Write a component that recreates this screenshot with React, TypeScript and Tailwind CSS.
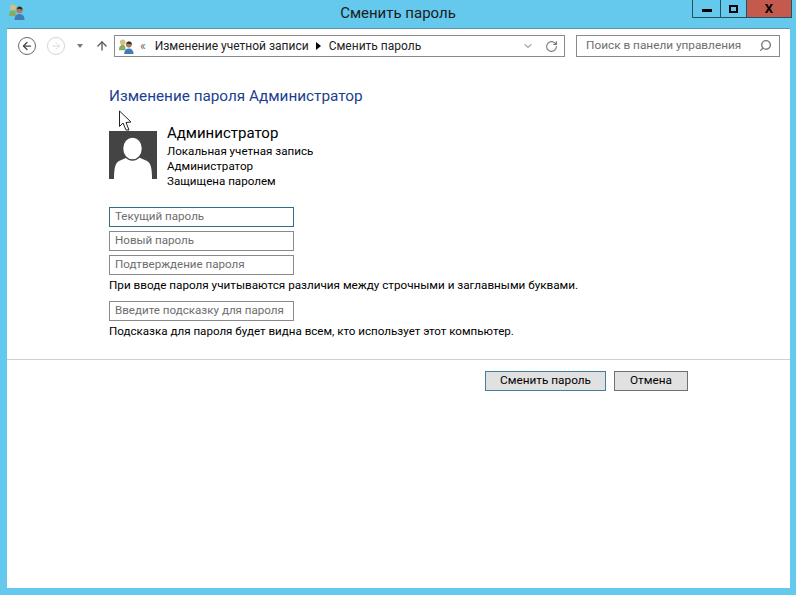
import React from "react";
import { ArrowLeft, ArrowRight, ArrowUp, ChevronDown, RotateCw, Search } from "lucide-react";

const UsersIcon = ({ size = 18 }: { size?: number }) => (
  <svg width={size} height={size} viewBox="0 0 18 18">
    <circle cx="5" cy="4.500" r="3" fill="#d3bf86" />
    <path d="M1 13c0-4 1.500-5.500 4-5.500S8 9 8 13z" fill="#86ab63" />
    <circle cx="11.500" cy="7" r="3.200" fill="#a97c58" />
    <path d="M11.500 3.600c2 0 3.200 1.300 3 3.200-1.400-.9-3.500-1-5.400-.6.100-1.500 1-2.600 2.400-2.600z" fill="#2f2c29" />
    <path d="M6.500 17c0-4 2-6 5-6s5 2 5 6z" fill="#3f7db8" />
  </svg>
);

const Field = ({ label, focused }: { label: string; focused?: boolean }) => (
  <div
    className={`w-[185px] h-5 border flex items-center pl-[5px] text-[11.6px] whitespace-nowrap text-[#6d6d6d] ${
      focused ? "border-[#2f6f86]" : "border-[#8a8a8a]"
    }`}
  >
    {label}
  </div>
);

export default function App() {
  return (
    <div
      className="relative w-[796px] h-[595px] flex flex-col bg-[#64c9ec] overflow-hidden text-black"
      style={{ fontFamily: 'Roboto, "Open Sans", sans-serif' }}
    >
      <div className="h-7 flex shrink-0">
        <div className="w-[692px] relative flex items-center pl-2 pb-1">
          <UsersIcon />
          <div className="absolute left-[104px] top-[2px] text-center text-[15px] text-[#1c1c1c] w-[588px]">Сменить пароль</div>
        </div>
        <div className="flex h-[18px] w-[100px] border border-t-0 border-[#23525f]">
          <div className="w-[28px] border-r border-[#23525f] flex items-center justify-center">
            <div className="w-[10px] h-[3px] mt-[4px] bg-black" />
          </div>
          <div className="w-[26px] border-r border-[#23525f] flex items-center justify-center">
            <div className="w-[9px] h-[8px] border-2 border-black" />
          </div>
          <div className="flex-1 bg-[#c4594e] flex items-center justify-center text-[13px] font-bold leading-none">X</div>
        </div>
      </div>

      <div className="flex-1 ml-[7px] mr-[6px] mb-[7px] bg-white flex flex-col border-t border-[#5f93a8]">
        <div className="h-[28px] mt-[3px] flex items-center pl-[11px]">
          <div className="w-[18px] h-[18px] rounded-full border border-[#6a6a6a] flex items-center justify-center">
            <ArrowLeft size={12} strokeWidth={2.5} className="text-[#444]" />
          </div>
          <div className="w-[18px] h-[18px] ml-[11px] rounded-full border border-[#d5d5d5] flex items-center justify-center">
            <ArrowRight size={12} strokeWidth={1.500} className="text-[#cfcfcf]" />
          </div>
          <div className="ml-[12px] w-0 h-0 border-x-[3.5px] border-x-transparent border-t-[4px] border-t-[#777]" />
          <ArrowUp size={14} strokeWidth={2.2} className="ml-[12px] text-[#555]" />
          <div className="ml-[5px] w-[451px] h-[22px] border border-[#8a8a8a] flex items-center pl-[3px] text-[12px] text-[#222]">
            <UsersIcon size={17} />
            <span className="ml-[5px] text-[#666]">«</span>
            <span className="ml-[9px]">Изменение учетной записи</span>
            <div className="ml-[7px] w-0 h-0 border-y-[4px] border-y-transparent border-l-[5px] border-l-black" />
            <span className="ml-[8px]">Сменить пароль</span>
            <ChevronDown size={12} strokeWidth={2} className="ml-auto text-[#666]" />
            <RotateCw size={13} className="ml-[11px] mr-[6px] text-[#777]" />
          </div>
          <div className="ml-[11px] w-[204px] h-[22px] border border-[#8a8a8a] flex items-center pl-[9px] pr-[7px] text-[11.8px] text-[#6d6d6d]">
            <span>Поиск в панели управления</span>
            <Search size={13} strokeWidth={2.5} className="ml-auto -mt-px text-[#777] -scale-x-100" />
          </div>
        </div>

        <div className="pl-[102px] pt-[26px] flex flex-col">
          <h1 className="text-[15.3px] leading-5 text-[#1a3f8f]">Изменение пароля Администратор</h1>
          <div className="mt-[25px] flex gap-[10px]">
            <div className="w-12 h-12 bg-[#444]">
              <svg viewBox="0 0 48 48" width="48" height="48">
                <path d="M5 48c0-10 1-16 5-18l9-4h10l9 4c4 2 5 8 5 18z" fill="#fff" />
                <ellipse cx="23.500" cy="17.500" rx="10" ry="11.500" fill="#fff" stroke="#444" strokeWidth="1.500" />
              </svg>
            </div>
            <div className="-mt-[6px] text-[11.6px] leading-[15px]">
              <div className="text-[15px] leading-[18px] mb-[2px] -mt-px">Администратор</div>
              <div>Локальная учетная запись</div>
              <div>Администратор</div>
              <div>Защищена паролем</div>
            </div>
          </div>
          <div className="mt-[18px] flex flex-col gap-1">
            <Field label="Текущий пароль" focused />
            <Field label="Новый пароль" />
            <Field label="Подтверждение пароля" />
          </div>
          <p className="mt-[2px] text-[11.7px] leading-[16px]">При вводе пароля учитываются различия между строчными и заглавными буквами.</p>
          <div className="mt-[8px]">
            <Field label="Введите подсказку для пароля" />
          </div>
          <p className="mt-[2px] text-[11.6px] leading-[16px]">Подсказка для пароля будет видна всем, кто использует этот компьютер.</p>
        </div>

        <div className="mt-[20px] h-px bg-[#d0d0d0]" />

        <div className="mt-[11px] flex justify-end pr-[102px] gap-2 text-[11.8px]">
          <button className="w-[121px] h-5 bg-[#e1e1e1] border border-[#3f7fa6]">Сменить пароль</button>
          <button className="w-[74px] h-5 bg-[#e1e1e1] border border-[#707070]">Отмена</button>
        </div>
      </div>

      <svg className="absolute left-[119px] top-[110px]" width="13" height="21" viewBox="0 0 13 21">
        <path d="M.5 1V16.500L4 13l3 7h3l-3-7.500 5-.5z" fill="#fff" stroke="#222" strokeWidth="1" />
      </svg>
    </div>
  );
}
